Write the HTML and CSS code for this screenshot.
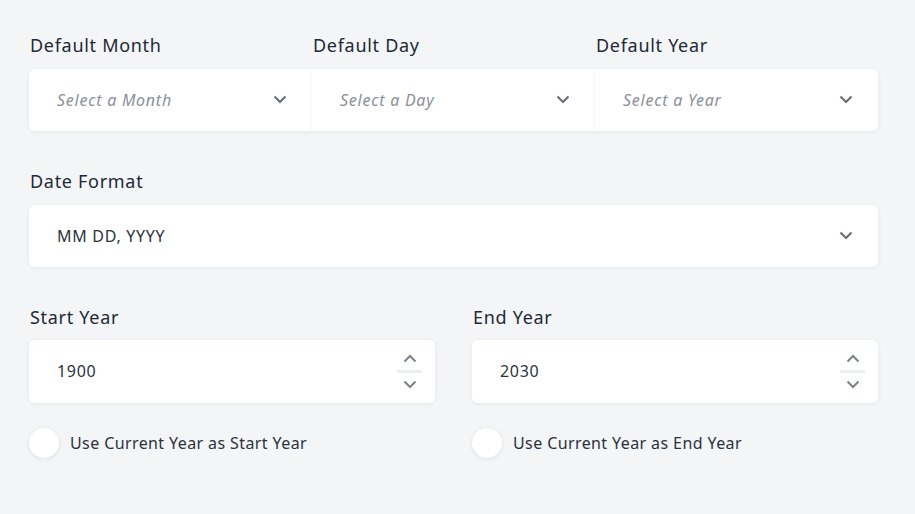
FILE: index.html
```html
<!DOCTYPE html>
<html lang="en">
<head>
<meta charset="utf-8">
<title>Date settings</title>
<link rel="stylesheet" href="styles.css">
</head>
<body>
<div class="page">
  <div class="row-three">
    <div class="field">
      <div class="label">Default Month</div>
      <div class="select first"><span class="placeholder">Select a Month</span>
        <svg class="chev" width="14" height="9" viewBox="0 0 14 9"><path d="M1.5 1.5 L7 7 L12.5 1.5" fill="none" stroke="#6b7077" stroke-width="2.2"/></svg></div>
    </div>
    <div class="field">
      <div class="label">Default Day</div>
      <div class="select middle"><span class="placeholder">Select a Day</span>
        <svg class="chev" width="14" height="9" viewBox="0 0 14 9"><path d="M1.5 1.5 L7 7 L12.5 1.5" fill="none" stroke="#6b7077" stroke-width="2.2"/></svg></div>
    </div>
    <div class="field">
      <div class="label">Default Year</div>
      <div class="select last"><span class="placeholder">Select a Year</span>
        <svg class="chev" width="14" height="9" viewBox="0 0 14 9"><path d="M1.5 1.5 L7 7 L12.5 1.5" fill="none" stroke="#6b7077" stroke-width="2.2"/></svg></div>
    </div>
  </div>

  <div class="group">
    <div class="label">Date Format</div>
    <div class="select single"><span class="value">MM DD, YYYY</span>
      <svg class="chev" width="14" height="9" viewBox="0 0 14 9"><path d="M1.5 1.5 L7 7 L12.5 1.5" fill="none" stroke="#6b7077" stroke-width="2.2"/></svg></div>
  </div>

  <div class="group row-two">
    <div class="field">
      <div class="label">Start Year</div>
      <div class="number"><span class="value">1900</span>
        <div class="spinner">
          <svg width="14" height="9" viewBox="0 0 14 9"><path d="M1.5 7.5 L7 2 L12.5 7.5" fill="none" stroke="#7d8288" stroke-width="2"/></svg>
          <span class="sep"></span>
          <svg width="14" height="9" viewBox="0 0 14 9"><path d="M1.5 1.5 L7 7 L12.5 1.5" fill="none" stroke="#7d8288" stroke-width="2"/></svg>
        </div>
      </div>
      <label class="check"><span class="circle"></span><span>Use Current Year as Start Year</span></label>
    </div>
    <div class="field">
      <div class="label">End Year</div>
      <div class="number"><span class="value">2030</span>
        <div class="spinner">
          <svg width="14" height="9" viewBox="0 0 14 9"><path d="M1.5 7.5 L7 2 L12.5 7.5" fill="none" stroke="#7d8288" stroke-width="2"/></svg>
          <span class="sep"></span>
          <svg width="14" height="9" viewBox="0 0 14 9"><path d="M1.5 1.5 L7 7 L12.5 1.5" fill="none" stroke="#7d8288" stroke-width="2"/></svg>
        </div>
      </div>
      <label class="check"><span class="circle"></span><span>Use Current Year as End Year</span></label>
    </div>
  </div>
</div>
</body>
</html>
```
FILE: styles.css
```css
* { box-sizing: border-box; }
html, body { margin: 0; padding: 0; }
body {
  background: #f4f5f7;
  font-family: "Noto Sans", "Open Sans", sans-serif;
  color: #1f2a36;
  width: 915px;
  height: 514px;
  overflow: hidden;
}
.page {
  padding: 33px 37px 0 29px;
}
.label {
  font-size: 18px;
  line-height: 24px;
  color: #1e2935;
  margin-bottom: 12px;
  padding-left: 1px;
  letter-spacing: 0.7px;
}
.row-three {
  display: grid;
  grid-template-columns: 283px 283px 283px;
}
.select {
  height: 62px;
  background: #fff;
  display: flex;
  align-items: center;
  justify-content: space-between;
  padding: 0 25px 1px 28px;
  box-shadow: 0 1px 4px rgba(30, 40, 60, 0.07);
}
.select.first { border-radius: 6px 0 0 6px; }
.select.middle { border-radius: 0; }
.select.last { border-radius: 0 6px 6px 0; }
.select.single { border-radius: 6px; }
.placeholder {
  font-size: 16px;
  font-style: italic;
  color: #8b9097;
  letter-spacing: 0.75px;
}
.value {
  font-size: 16px;
  color: #2c333b;
  letter-spacing: 0.7px;
}
.chev { display: block; }
.group { margin-top: 38px; }
.row-two {
  display: grid;
  grid-template-columns: 406px 406px;
  column-gap: 37px;
}
.number {
  height: 63px;
  margin-top: -1px;
  background: #fff;
  border-radius: 6px;
  box-shadow: 0 1px 4px rgba(30, 40, 60, 0.07);
  display: flex;
  align-items: center;
  justify-content: space-between;
  padding: 0 13px 1px 28px;
}
.spinner {
  display: flex;
  flex-direction: column;
  align-items: center;
  gap: 7px;
  width: 25px;
}
.spinner svg { display: block; }
.sep {
  display: block;
  width: 25px;
  height: 3px;
  background: #eceef1;
}
.check {
  display: flex;
  align-items: center;
  gap: 11px;
  margin-top: 25px;
  font-size: 16px;
  color: #2a333d;
  letter-spacing: 0.4px;
}
.circle {
  width: 30px;
  height: 30px;
  border-radius: 50%;
  background: #fff;
  box-shadow: 0 1px 4px rgba(30, 40, 60, 0.1);
}
```
